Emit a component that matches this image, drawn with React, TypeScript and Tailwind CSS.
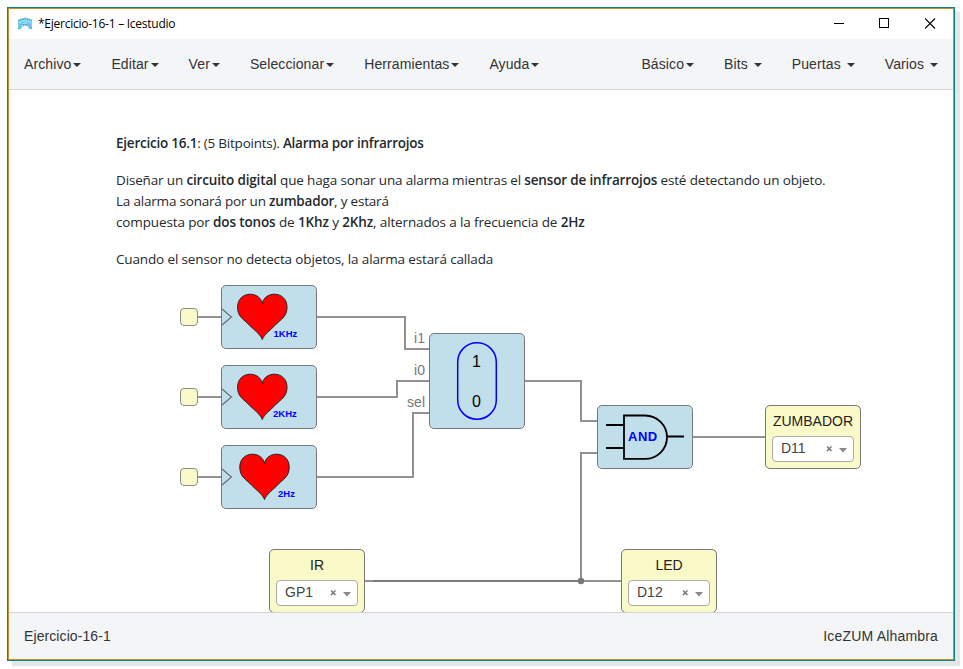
import React from "react";

function Caret() {
  return (
    <span className="mt-[2px] h-0 w-0 border-x-4 border-t-4 border-x-transparent border-t-[#333]" />
  );
}

function MenuItem({ label, spaced = false }: { label: string; spaced?: boolean }) {
  return (
    <div className={`flex items-center px-[15px] ${spaced ? "gap-[6px]" : "gap-[2px]"}`}>
      <span className="leading-5 tracking-[0.1px]">{label}</span>
      <Caret />
    </div>
  );
}

function Logo() {
  return (
    <svg width="16" height="14" viewBox="0 0 16 14">
      <path d="M1 3 L4 2 L8 .5 L12 2 L15 3 V12 L12.500 12.500 L10.500 9.500 L8 8.500 L5.500 9.500 L3.500 12.500 L1 12 Z" fill="#74cdf1" />
      <path d="M1.500 6 L8 3 L14.500 6 M2.500 9.500 L8 5.500 L13.500 9.500" fill="none" stroke="#a5e2fa" strokeWidth="1" />
      <path d="M1 3.500 L4 2 L6 2.500 L8 1 L10 2.500 L12 2 L15 3.500 M1 12 L4.500 7 L8 8 L11.500 7 L15 12" fill="none" stroke="#327e9f" strokeWidth="0.8" strokeDasharray="1.500 1" />
    </svg>
  );
}

function TitleBar() {
  return (
    <header className="flex h-[30px] shrink-0 items-center bg-white pl-2">
      <Logo />
      <span className="ml-[5px] font-['Open_Sans','Noto_Sans',sans-serif] text-[12px] leading-4 tracking-[-0.25px] whitespace-pre text-black">
        *Ejercicio-16-1 – Icestudio
      </span>
      <div className="mr-[17px] mb-[2px] ml-auto flex items-center gap-[35px]">
        <svg width="11" height="11" className="block"><path d="M1 5.500H11" stroke="#000" /></svg>
        <svg width="11" height="11" className="block"><rect x=".5" y=".5" width="9" height="9" fill="none" stroke="#000" /></svg>
        <svg width="11" height="11" className="block"><path d="M0 .5 10 10.500M10 .5 0 10.500" stroke="#000" strokeWidth="1.1" /></svg>
      </div>
    </header>
  );
}

function Clock({ pos, label, heartX, textX }: { pos: string; label: string; heartX: number; textX: number }) {
  return (
    <div className={`absolute h-16 w-24 rounded-[5px] border border-[#777] bg-[#c0dfeb] ${pos}`}>
      <svg width="94" height="62" viewBox="1 1 94 62" className="block">
        <path d="M1 24 10.500 32 1 40" fill="none" stroke="#666" strokeWidth="1.1" />
        <g transform={`translate(${heartX} 0)`}>
          <path
            d="M25 54.500C23 49 17 45.500 10 38C4 33 .3 30 .3 22C.3 14 6 9.200 13 9.200C19 9.200 24 13 25 18.500C26 13 31 9.200 37 9.200C44 9.200 49.700 14 49.700 22C49.700 30 46 33 40 38C33 45.500 27 49 25 54.500Z"
            fill="#f00"
            stroke="#222"
            strokeWidth="1"
          />
        </g>
        <text x={textX} y="52" fill="#00f" className="font-['Liberation_Sans',Arial,sans-serif] text-[9.500px] font-bold">{label}</text>
      </svg>
    </div>
  );
}

function Port({ pos }: { pos: string }) {
  return <div className={`absolute h-[18px] w-[18px] rounded-[4px] border border-[#8c8c8c] bg-[#fafac8] ${pos}`} />;
}

function Pin({ pos, name, value }: { pos: string; name: string; value: string }) {
  return (
    <div className={`absolute flex h-16 w-24 flex-col items-center rounded-[5px] border border-[#777] bg-[#fafac8] pt-[5px] ${pos}`}>
      <span className="leading-5 text-[#222]">{name}</span>
      <div className="mt-[5px] flex h-[26px] w-[82px] items-center rounded-[4px] border border-[#aaa] bg-white pl-2 text-[#444]">
        <span className="pb-[2px] leading-[22px]">{value}</span>
        <svg width="22" height="10" viewBox="0 0 22 10" className="mr-[5px] ml-auto block">
          <path d="M1 2.500 5.500 7M5.500 2.500 1 7" stroke="#777" strokeWidth="1.500" />
          <path d="M13 4H21L17 8.500Z" fill="#888" />
        </svg>
      </div>
    </div>
  );
}

function Statement() {
  return (
    <div className="pt-[43px] pl-[107px] font-['Open_Sans','Noto_Sans',sans-serif] text-[13.500px] leading-[21px] whitespace-nowrap text-[#24292e] [&_b]:font-semibold">
      <p className="tracking-[-0.23px]"><b>Ejercicio 16.1</b>: (5 Bitpoints). <b>Alarma por infrarrojos</b></p>
      <p className="mt-4 tracking-[-0.155px]">Diseñar un <b>circuito digital</b> que haga sonar una alarma mientras el <b>sensor de infrarrojos</b> esté detectando un objeto.</p>
      <p className="tracking-[-0.2px]">La alarma sonará por un <b>zumbador</b>, y estará</p>
      <p className="tracking-[-0.13px]">compuesta por <b>dos tonos</b> de <b>1Khz</b> y <b>2Khz</b>, alternados a la frecuencia de <b>2Hz</b></p>
      <p className="mt-4 tracking-[-0.14px]">Cuando el sensor no detecta objetos, la alarma estará callada</p>
    </div>
  );
}

function Wires() {
  return (
    <svg width="944" height="522" viewBox="9 90 944 522" className="absolute top-0 left-0">
      <g fill="none" stroke="#929292" strokeWidth="2">
        <path d="M197 317H221M197 397H221M197 477H221" />
        <path d="M317 317H405V349H429" />
        <path d="M317 397H397V381H429" />
        <path d="M317 477H413V413H429" />
        <path d="M525 381H581V421H597" />
        <path d="M597 453H581V581" />
        <path d="M693 437H765" />
        <path d="M365 581H621" />
        <path d="M373 581H581" stroke="#7c7c7c" />
      </g>
      <circle cx="581" cy="581" r="3.200" fill="#777" />
      <g fill="#777" textAnchor="end" className="text-[14px]">
        <text x="425" y="343">i1</text>
        <text x="425" y="375">i0</text>
        <text x="425" y="407">sel</text>
      </g>
    </svg>
  );
}

function Mux() {
  return (
    <div className="absolute top-[243px] left-[420px] h-24 w-24 rounded-[5px] border border-[#777] bg-[#c0dfeb]">
      <svg width="94" height="94" viewBox="430 334 94 94" className="block">
        <rect x="457.700" y="342.700" width="38.600" height="76.600" rx="19.300" fill="none" stroke="#00f" strokeWidth="1.500" />
        <g textAnchor="middle" className="text-[16px]" fill="#000">
          <text x="476.500" y="367">1</text>
          <text x="476.500" y="407">0</text>
        </g>
      </svg>
    </div>
  );
}

function AndGate() {
  return (
    <div className="absolute top-[315px] left-[588px] h-16 w-24 rounded-[5px] border border-[#777] bg-[#c0dfeb]">
      <svg width="94" height="62" viewBox="598 406 94 62" className="block">
        <path
          d="M606 425H624M606 448H624M667 436.500H684M624 415.500H645A22 21.700 0 0 1 645 458.900H624Z"
          fill="none"
          stroke="#000"
          strokeWidth="1.800"
        />
        <text x="628" y="441" fill="#00f" className="text-[13px] font-bold tracking-[0.5px]">AND</text>
      </svg>
    </div>
  );
}

export default function App() {
  return (
    <div className="h-[669px] w-[963px] overflow-hidden bg-[#fefefe] pt-[7px] pl-[7px] font-['Liberation_Sans',Arial,sans-serif] text-[14px] text-[#333]">
      <div className="h-[654px] w-[948px] border border-[#0b8387] shadow-[5px_5px_1px_#e6e6e6]">
        <div className="flex h-full flex-col border border-[#c1912d] bg-white">
          <TitleBar />
          <nav className="flex h-[51px] shrink-0 items-stretch justify-between border-b border-[#d3d6dc] bg-[#f4f5f7]">
            <div className="flex">
              <MenuItem label="Archivo" />
              <MenuItem label="Editar" />
              <MenuItem label="Ver" />
              <MenuItem label="Seleccionar" />
              <MenuItem label="Herramientas" />
              <MenuItem label="Ayuda" />
            </div>
            <div className="flex">
              <MenuItem label="Básico" />
              <MenuItem label="Bits" spaced />
              <MenuItem label="Puertas" spaced />
              <MenuItem label="Varios" spaced />
            </div>
          </nav>
          <main className="relative h-[522px] shrink-0 overflow-hidden">
            <Statement />
            <Wires />
            <Port pos="top-[218px] left-[171px]" />
            <Port pos="top-[298px] left-[171px]" />
            <Port pos="top-[378px] left-[171px]" />
            <Clock pos="top-[195px] left-[212px]" label="1KHz" heartX={16.3} textX={52.5} />
            <Clock pos="top-[275px] left-[212px]" label="2KHz" heartX={16.3} textX={52} />
            <Clock pos="top-[355px] left-[212px]" label="2Hz" heartX={18.5} textX={57} />
            <Mux />
            <AndGate />
            <Pin pos="top-[315px] left-[756px]" name="ZUMBADOR" value="D11" />
            <Pin pos="top-[459px] left-[260px]" name="IR" value="GP1" />
            <Pin pos="top-[459px] left-[612px]" name="LED" value="D12" />
          </main>
          <footer className="flex flex-1 items-center justify-between border-t border-[#d3d6dc] bg-[#f4f5f7] px-[15px]">
            <span className="tracking-[0.09px]">Ejercicio-16-1</span>
            <span className="tracking-[0.18px]">IceZUM Alhambra</span>
          </footer>
        </div>
      </div>
    </div>
  );
}
